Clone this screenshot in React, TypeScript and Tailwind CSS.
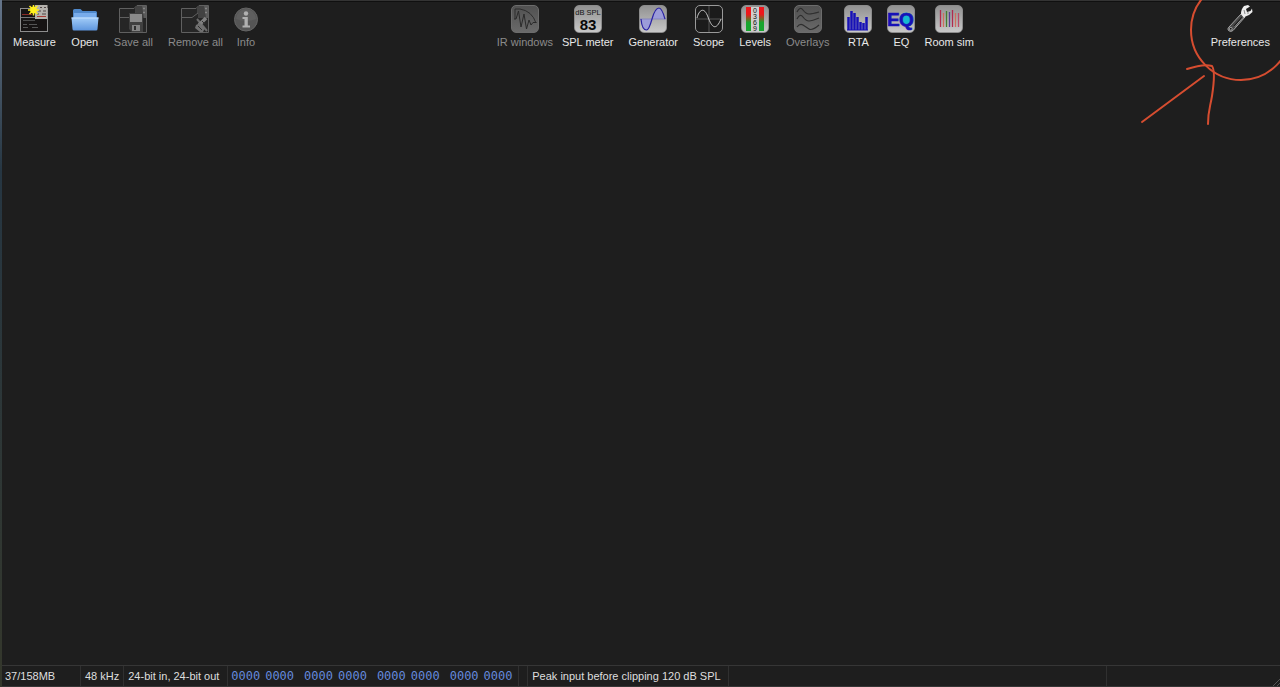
import { ReactNode } from "react";

type Tool = { label: string; icon: ReactNode; disabled?: boolean; className?: string };

const LIGHT = "border-[#8c8c8c] bg-linear-to-b from-[#929292] to-[#c8c8c8]";
const DIM = "border-[#6c6c6c] bg-linear-to-b from-[#515151] to-[#6a6a6a]";
const DARK = "border-[#9a9a9a] bg-[#1b1b1b]";

function Tile({ tone, children }: { tone: string; children: ReactNode }) {
  return (
    <span className={`block size-7 overflow-hidden rounded-[5px] border ${tone}`}>
      <svg viewBox="1 1 26 26" className="size-full" fill="none" aria-hidden="true">{children}</svg>
    </span>
  );
}

function MeasureIcon() {
  return (
    <svg viewBox="0 0 28 28" className="size-7" fill="none" aria-hidden="true">
      <rect x="0.5" y="3.5" width="27" height="23" fill="#161313" stroke="#8d8d8d" />
      <path d="M1 12.5H27" stroke="#777" />
      <path d="M2 9.5h10" stroke="#8b2b25" />
      <path d="M3 15.5h12" stroke="#4c4c4c" />
      <path d="M3 19.500h4M9 19.500h8M3 22.500h5M12 22.500h6" stroke="#555" />
      <rect x="15" y="0" width="12.5" height="14" fill="#b5b2ad" />
      <path d="M20 2.500h2M24 2.500h2M18 6h3M23 6h3M17 9h2M22 9h4" stroke="#514747" strokeWidth="1.2" />
      <path d="M17 11.5h9" stroke="#a83b34" />
      <path d="M13.500 -0.500V10.500M8 5H19M9.500 1L17.500 9M17.500 1L9.500 9" stroke="#ffee1c" strokeWidth="1.500" />
      <circle cx="13.500" cy="5" r="3.400" fill="#fff01f" />
    </svg>
  );
}

function FolderIcon() {
  return (
    <svg viewBox="0 0 28 28" className="size-7" aria-hidden="true">
      <defs>
        <linearGradient id="folder-front" x1="0" y1="0" x2="0" y2="1">
          <stop offset="0" stopColor="#a3cdf8" />
          <stop offset="1" stopColor="#5e96de" />
        </linearGradient>
      </defs>
      <path d="M2 22V5.500Q2 4 3.500 4H9.500L11.500 6H24.500Q26 6 26 7.500V22Z" fill="#4f88ca" />
      <path d="M3 8H25V14H3Z" fill="#78aceb" />
      <path d="M0.500 12.500H27.500L26.500 24Q26.500 25.500 25 25.500H3Q1.500 25.500 1.500 24Z" fill="url(#folder-front)" />
      <path d="M0.500 13H27.500" stroke="#c1dfff" />
    </svg>
  );
}

function StackIcon({ children }: { children: ReactNode }) {
  return (
    <svg viewBox="0 0 28 28" className="size-7" fill="none" aria-hidden="true">
      <path d="M0.500 3.500H15L18 0.500H27.500V27.500H0.500Z" fill="#262626" stroke="#606060" />
      <path d="M1 12.500H11L17 8V3" stroke="#606060" />
      <path d="M17 1H27V13H17Z" fill="#424242" />
      <path d="M23 1H27V13H25Z" fill="#5a5a5a" />
      <path d="M24 3.500h2M24 7.500h2" stroke="#858585" strokeWidth="1.500" />
      {children}
    </svg>
  );
}

function SaveAllIcon() {
  return (
    <StackIcon>
      <path d="M10 8H24V27H13L10 24Z" fill="#404040" />
      <rect x="11" y="9" width="12" height="8" fill="#8a8a8a" />
      <rect x="13" y="20" width="8" height="6" fill="#848484" />
      <rect x="15" y="21" width="2" height="4" fill="#303030" />
    </StackIcon>
  );
}

function RemoveAllIcon() {
  return (
    <StackIcon>
      <path d="M16 14L26 26" stroke="#6b6b6b" strokeWidth="2" />
      <path d="M25 13L18 20" stroke="#808080" strokeWidth="3.500" />
      <path d="M15 20L19 18L24 23L22 27H19L14 23Z" fill="#707070" />
      <path d="M17 21l4 4M21 16l3 3" stroke="#303030" />
    </StackIcon>
  );
}

function InfoIcon() {
  return (
    <svg viewBox="0 0 28 28" className="size-7" aria-hidden="true">
      <circle cx="14" cy="14.500" r="11.500" fill="#555" stroke="#646464" />
      <path d="M4 14A10 10 0 0 1 24 14Q14 18 4 14Z" fill="#5e5e5e" />
      <circle cx="14" cy="8.500" r="2.200" fill="#b0b0b0" />
      <path d="M10.500 12H15.800V20.500H18V22.500H10.500V20.500H12.500V14H10.500Z" fill="#b0b0b0" />
    </svg>
  );
}

function WrenchIcon() {
  return (
    <svg viewBox="0 0 28 28" className="size-7" fill="none" aria-hidden="true">
      <path d="M3 22L15 9L19 12L7 25.500Q4.500 27.500 2.500 25.500Q1 24 3 22Z" fill="#484848" stroke="#a4a4a4" />
      <path d="M8 21.500L16 12.500" stroke="#191919" strokeWidth="1.500" />
      <path d="M8.500 22L17 12.500" stroke="#c5c5c5" strokeWidth="0.700" />
      <circle cx="4.800" cy="23.800" r="1.400" fill="#171717" stroke="#bababa" strokeWidth="0.800" />
      <path d="M15 9Q15 4 18 1L22 0L24 1.500L20 4L21 7L24.500 6L26 3.500L26.500 7L23 10L19.500 11.500L18 13Z" fill="#ededed" />
      <path d="M18 5L19 9M21 8L23 8" stroke="#8a8a8a" />
    </svg>
  );
}

const FILE_TOOLS: Tool[] = [
  { label: "Measure", icon: <MeasureIcon /> },
  { label: "Open", icon: <FolderIcon /> },
  { label: "Save all", icon: <SaveAllIcon />, disabled: true },
  { label: "Remove all", icon: <RemoveAllIcon />, disabled: true },
  { label: "Info", icon: <InfoIcon />, disabled: true, className: "-ml-1.5" }
];

const ANALYSIS_TOOLS: Tool[] = [
  {
    label: "IR windows",
    disabled: true,
    className: "-mr-1.5",
    icon: (
      <Tile tone={DIM}>
        <path d="M4 14V4H9Q21 6 25 18" stroke="#2d2d2d" />
        <path d="M3 14H5L7.500 6L10 22L13 9L15.500 24L18 15L20 20L22 17.500H25.500" stroke="#2a2a2a" strokeLinejoin="round" />
      </Tile>
    )
  },
  {
    label: "SPL meter",
    icon: (
      <Tile tone={LIGHT}>
        <text x="14" y="10" textAnchor="middle" fontSize="7.500" fill="#151515">dB SPL</text>
        <text x="14" y="24.500" textAnchor="middle" fontSize="15" fontWeight="bold" fill="#080808">83</text>
      </Tile>
    )
  },
  {
    label: "Generator",
    icon: (
      <Tile tone={LIGHT}>
        <path d="M2 14Q3 25 7.500 25Q10 25 13 14Q16 3 20 3Q23 3 26 14Z" fill="#9c9cd9" />
        <path d="M1 14H27" stroke="#8585bd" />
        <path d="M2 14Q3 25 7.500 25Q10 25 13 14Q16 3 20 3Q23 3 26 14" stroke="#2a22a3" strokeWidth="1.200" />
      </Tile>
    )
  },
  {
    label: "Scope",
    icon: (
      <Tile tone={DARK}>
        <path d="M14 1V27M1 14H27" stroke="#555" />
        <path d="M2 13C4 5 9 1 13 12S21 26 26 14" stroke="#c5c5c5" />
      </Tile>
    )
  },
  {
    label: "Levels",
    icon: (
      <Tile tone={LIGHT}>
        <defs>
          <linearGradient id="level-bar" x1="0" y1="0" x2="0" y2="1">
            <stop offset="0.3" stopColor="#ee171c" />
            <stop offset="0.65" stopColor="#18a52e" />
          </linearGradient>
        </defs>
        <path d="M5 2H10V26H5ZM18 2H23V26H18Z" fill="url(#level-bar)" />
        <path d="M10 2H18V26H10Z" fill="#cecece" />
        <g fontSize="7" fill="#101010" textAnchor="middle">
          <text x="14" y="8">0</text>
          <text x="14" y="14">3</text>
          <text x="14" y="20">6</text>
          <text x="14" y="26">9</text>
        </g>
      </Tile>
    )
  },
  {
    label: "Overlays",
    disabled: true,
    icon: (
      <Tile tone={DIM}>
        <path d="M3 7Q6 1 9 5T15 9T25 7M3 14Q6 8 9 12T15 16T25 13M3 22Q6 18 9 20T15 24T25 20" stroke="#2e2e2e" strokeWidth="1.200" />
      </Tile>
    )
  },
  {
    label: "RTA",
    icon: (
      <Tile tone={LIGHT}>
        <path d="M4.500 25V12M7.500 25V6M10.500 25V8M13.500 25V12M16.500 25V17M19.500 25V18M22.500 25V12" stroke="#1711b7" strokeWidth="2.500" />
        <path d="M3 25H24" stroke="#1711b7" />
      </Tile>
    )
  },
  {
    label: "EQ",
    icon: (
      <Tile tone={LIGHT}>
        <circle cx="19" cy="14" r="6.500" fill="#17b8d1" />
        <g fontSize="19" fontWeight="bold" fill="#1711b7" stroke="#1711b7" strokeWidth="0.6">
          <text x="0" y="21">E</text>
          <text x="12" y="21">Q</text>
        </g>
      </Tile>
    )
  },
  {
    label: "Room sim",
    className: "-ml-1.5",
    icon: (
      <Tile tone={LIGHT}>
        <g strokeWidth="1.300">
          <path d="M5.500 5V22M17.500 5V22" stroke="#b02a50" />
          <path d="M8.500 8V22M20.500 8V22" stroke="#cf6e5c" />
          <path d="M11.500 6V22" stroke="#417f30" />
          <path d="M14.500 7V22" stroke="#553d94" />
          <path d="M23.500 8V22" stroke="#b94c68" />
        </g>
      </Tile>
    )
  }
];

function ToolButton({ label, icon, disabled, className = "" }: Tool) {
  return (
    <button
      type="button"
      disabled={disabled}
      className={`flex flex-col items-center gap-px whitespace-nowrap ${disabled ? "text-[#8b8b8b]" : "text-[#e8e8e8]"} ${className}`}
    >
      {icon}
      <span className="leading-4">{label}</span>
    </button>
  );
}

function ToolGroup({ tools }: { tools: Tool[] }) {
  return (
    <div className="flex items-start gap-[15px]">
      {tools.map((tool) => <ToolButton key={tool.label} {...tool} />)}
    </div>
  );
}

function StatusBar() {
  return (
    <footer className="flex h-[22px] items-stretch border-y border-[#363636] leading-5 whitespace-nowrap text-[#dedede]">
      <div className="w-[79px] border-r border-[#303030] pl-[3px]">37/158MB</div>
      <div className="border-r border-[#303030] px-1">48 kHz</div>
      <div className="min-w-[104px] border-r border-[#303030] px-1">24-bit in, 24-bit out</div>
      <div className="flex w-[291px] gap-2.5 border-r border-[#303030] pl-[3px] font-['DejaVu_Sans_Mono',monospace] text-xs leading-5 text-[#6489dc]">
        {[0, 1, 2, 3].map((byte) => (
          <span key={byte} className="flex gap-[5px]">
            <span>0000</span>
            <span>0000</span>
          </span>
        ))}
      </div>
      <div className="w-[9px] border-r border-[#303030]" />
      <div className="min-w-[201px] border-r border-[#303030] px-1">Peak input before clipping 120 dB SPL</div>
      <div className="flex-1 border-r border-[#303030]" />
      <div className="flex w-[173px] items-end justify-end">
        <svg viewBox="0 0 8 8" className="size-2" aria-hidden="true">
          <path d="M1 8L8 1M5 8L8 5" stroke="#555" />
        </svg>
      </div>
    </footer>
  );
}

function Annotation() {
  return (
    <svg viewBox="0 0 150 130" className="pointer-events-none absolute top-0 right-0 h-[130px] w-[150px]" fill="none" stroke="#d64d30" strokeWidth="2" strokeLinecap="round" aria-hidden="true">
      <circle cx="111" cy="30" r="50" />
      <path d="M12 122L74 76" />
      <path d="M57 69C66 66 76 64 82 66C85 70 84 83 82 96C80 108 78 111 78 124" />
    </svg>
  );
}

export default function App() {
  return (
    <div className="relative flex h-screen overflow-hidden bg-[#1e1e1e] font-['Liberation_Sans',Arial,sans-serif] text-[11px]">
      <div className="w-0.5 shrink-0 bg-linear-to-b from-[#65758a] via-[#263642] via-25% to-[#34372b]" />
      <div className="flex min-w-0 flex-1 flex-col border-t border-[#343434]">
        <header className="flex items-start justify-between border-t border-[#101010] pt-[3px] pr-2.5 pl-[11px]">
          <ToolGroup tools={FILE_TOOLS} />
          <ToolGroup tools={ANALYSIS_TOOLS} />
          <ToolButton label="Preferences" icon={<WrenchIcon />} />
        </header>
        <main className="flex-1" />
        <StatusBar />
      </div>
      <Annotation />
    </div>
  );
}
